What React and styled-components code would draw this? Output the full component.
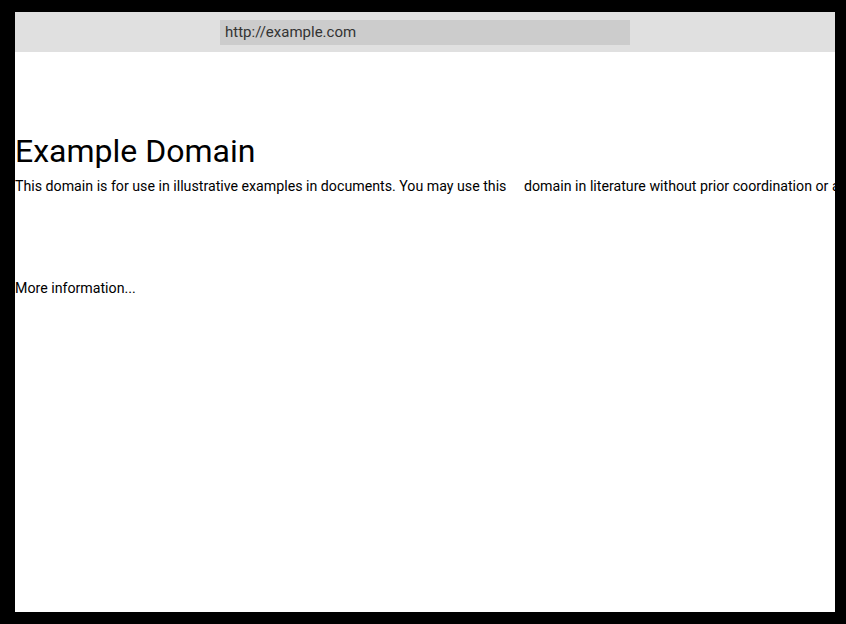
import styled, { createGlobalStyle } from "styled-components"

const Global = createGlobalStyle`
  html, body {
    margin:0;
    padding:0;
    background:#000;
  }
`

const Frame = styled.div`
  width:820px;
  height:600px;
  margin:12px 11px 12px 15px;
  background:#fff;
  display:flex;
  flex-direction:column;
  overflow:hidden;
  font-family:Roboto, "Liberation Sans", sans-serif;
  color:#000;
`

const Toolbar = styled.div`
  height:40px;
  flex-shrink:0;
  background:#e0e0e0;
  display:flex;
  align-items:center;
  padding-left:205px;
`

const Address = styled.div`
  width:405px;
  height:25px;
  padding-left:5px;
  background:#cccccc;
  color:#333;
  font-size:15px;
  line-height:25px;
`

const Page = styled.div`
  display:flex;
  flex-direction:column;
  padding-top:80px;
`

const Title = styled.h1`
  margin:0 0 7px;
  font-size:32px;
  font-weight:400;
  line-height:38px;
`

const Text = styled.p`
  margin:0;
  font-size:14.2px;
  line-height:18px;
  white-space:pre;
  margin-bottom:${p => p.$gap || 0}px;
`

const App = () => {
  return (
    <>
      <Global />
      <Frame>
        <Toolbar>
          <Address>http://example.com</Address>
        </Toolbar>
        <Page>
          <Title>Example Domain</Title>
          <Text $gap={84}>This domain is for use in illustrative examples in documents. You may use this     domain in literature without prior coordination or asking for permission.</Text>
          <Text>More information...</Text>
        </Page>
      </Frame>
    </>
  )
}

export default App
